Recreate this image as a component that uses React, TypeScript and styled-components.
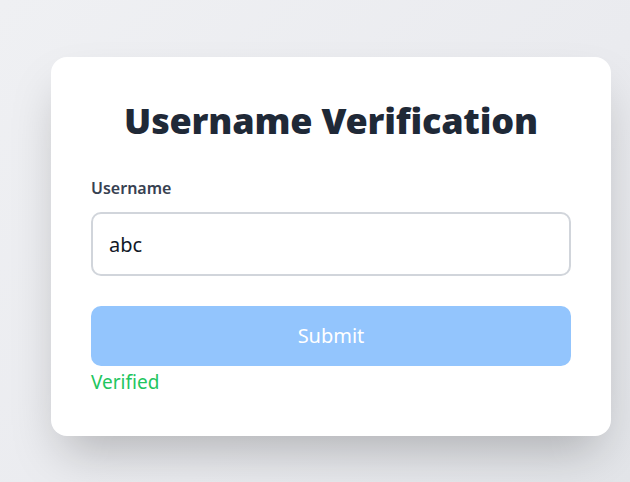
import React, { useState } from 'react'
import styled, { createGlobalStyle } from 'styled-components'

const GlobalStyle = createGlobalStyle`
  html, body {
    margin: 0;
    padding: 0;
  }
  body {
    font-family: "Noto Sans", "Open Sans", sans-serif;
    background: linear-gradient(135deg, #eff0f3 0%, #eaebef 60%, #e3e5e9 100%);
    min-height: 100vh;
  }
  * {
    box-sizing: border-box;
  }
`

const Page = styled.div`
  min-height: 100vh;
  padding: 57px 0 0 51px;
`

const Card = styled.div`
  width: 560px;
  background: #fff;
  border-radius: 16px;
  padding: 40px;
  box-shadow: 0 25px 50px -12px rgba(0, 0, 0, 0.25);
`

const Title = styled.h1`
  margin: 0 0 31px;
  text-align: center;
  font-size: 36px;
  line-height: 48px;
  font-weight: 900;
  letter-spacing: -0.2px;
  color: #1f2937;
`

const Label = styled.label`
  display: block;
  font-size: 16px;
  line-height: 24px;
  font-weight: 600;
  color: #374151;
  margin-bottom: 12px;
`

const Input = styled.input`
  display: block;
  width: 100%;
  height: 64px;
  padding: 16px;
  border: 2px solid #d1d5db;
  border-radius: 10px;
  font-family: inherit;
  font-size: 20px;
  line-height: 28px;
  color: #111827;
  margin-bottom: 30px;
  outline: none;
`

const Button = styled.button<{ $disabled?: boolean }>`
  display: block;
  width: 100%;
  height: 60px;
  border: none;
  border-radius: 10px;
  background: ${p => (p.$disabled ? '#93c5fd' : '#3b82f6')};
  color: #fff;
  font-family: inherit;
  font-size: 20px;
  line-height: 28px;
  cursor: ${p => (p.$disabled ? 'not-allowed' : 'pointer')};
`

const Status = styled.p<{ $ok?: boolean }>`
  margin: 2px 0 0;
  font-size: 19px;
  line-height: 28px;
  color: ${p => (p.$ok ? '#22c55e' : '#ef4444')};
`

export default function App() {
  const [name, setName] = useState('abc')

  return (
    <Page>
      <GlobalStyle />
      <Card>
        <Title>Username Verification</Title>
        <Label htmlFor="username">Username</Label>
        <Input id="username" value={name} onChange={e => setName(e.target.value)} />
        <Button $disabled>Submit</Button>
        <Status $ok>Verified</Status>
      </Card>
    </Page>
  )
}
